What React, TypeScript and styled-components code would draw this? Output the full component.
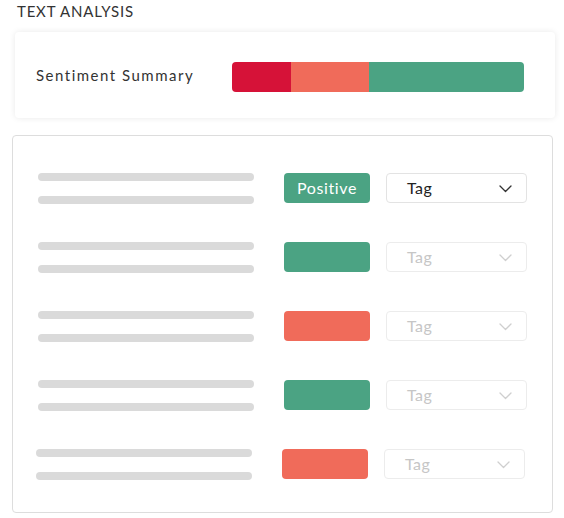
import React from "react";
import styled, { createGlobalStyle } from "styled-components";

const Global = createGlobalStyle`
  html, body { margin: 0; padding: 0; background: #ffffff; }
  body { font-family: "Lato", "Noto Sans", sans-serif; color: #222; }
`;

const Page = styled.div`
  width: 564px;
  height: 518px;
  box-sizing: border-box;
  padding: 2px 0 0 0;
  display: flex;
  flex-direction: column;
`;

const Title = styled.div`
  margin-left: 17px;
  font-size: 15px;
  line-height: 18px;
  color: #333;
  letter-spacing: 0.8px;
`;

const SummaryCard = styled.div`
  margin: 12px 9px 0 15px;
  height: 86px;
  box-sizing: border-box;
  padding: 2px 31px 0 21px;
  background: #fff;
  border-radius: 4px;
  box-shadow: 0 0 6px rgba(0, 0, 0, 0.09);
  display: flex;
  align-items: center;
  justify-content: space-between;
`;

const SummaryLabel = styled.span`
  font-size: 15px;
  color: #333;
  letter-spacing: 1.5px;
  margin-top: -3px;
`;

const Bar = styled.div`
  width: 292px;
  height: 30px;
  display: flex;
  border-radius: 4px;
  overflow: hidden;
  margin-top: 2px;
`;

const Segment = styled.div<{ $color: string; $w: number }>`
  width: ${(p) => p.$w}px;
  background: ${(p) => p.$color};
`;

const Panel = styled.div`
  margin: 17px 11px 0 12px;
  height: 378px;
  box-sizing: border-box;
  border: 1px solid #dddddd;
  border-radius: 4px;
  padding: 37px 25px 0 25px;
  display: flex;
  flex-direction: column;
  gap: 39px;
`;

const Row = styled.div<{ $shift?: number }>`
  display: flex;
  align-items: center;
  height: 30px;
  margin-left: ${(p) => -(p.$shift || 0)}px;
`;

const Lines = styled.div`
  width: 216px;
  display: flex;
  flex-direction: column;
  gap: 15px;
  margin-top: 1px;
`;

const Line = styled.div`
  height: 8px;
  border-radius: 4px;
  background: #dadada;
`;

const Badge = styled.div<{ $color: string }>`
  margin-left: 30px;
  width: 86px;
  height: 30px;
  border-radius: 4px;
  background: ${(p) => p.$color};
  color: #fff;
  font-size: 16px;
  letter-spacing: 0.6px;
  display: flex;
  align-items: center;
  justify-content: center;
  padding-bottom: 2px;
  box-sizing: border-box;
`;

const Select = styled.div<{ $active?: boolean }>`
  margin-left: 16px;
  width: 141px;
  height: 30px;
  box-sizing: border-box;
  border: 1px solid ${(p) => (p.$active ? "#e3e3e3" : "#ececec")};
  border-radius: 4px;
  padding: 0 14px 2px 20px;
  display: flex;
  align-items: center;
  justify-content: space-between;
  color: ${(p) => (p.$active ? "#222" : "#c6c6c6")};
  font-size: 16px;
  letter-spacing: 0.5px;
`;

const ChevronBox = styled.svg`
  margin-top: 3px;
`;

const Chevron = ({ color }: { color: string }) => (
  <ChevronBox width="13" height="8" viewBox="0 0 13 8" fill="none">
    <path d="M1 1 L6.5 6.5 L12 1" stroke={color} strokeWidth="1.3" strokeLinecap="round" strokeLinejoin="round" />
  </ChevronBox>
);

const GREEN = "#4ba383";
const ORANGE = "#f06b5a";
const RED = "#d61238";

const rows = [
  { color: GREEN, label: "Positive", active: true, shift: 0 },
  { color: GREEN, label: "", active: false, shift: 0 },
  { color: ORANGE, label: "", active: false, shift: 0 },
  { color: GREEN, label: "", active: false, shift: 0 },
  { color: ORANGE, label: "", active: false, shift: 2 },
];

export default function App() {
  return (
    <>
      <Global />
      <Page>
        <Title>TEXT ANALYSIS</Title>
        <SummaryCard>
          <SummaryLabel>Sentiment Summary</SummaryLabel>
          <Bar>
            <Segment $color={RED} $w={59} />
            <Segment $color={ORANGE} $w={78} />
            <Segment $color={GREEN} $w={155} />
          </Bar>
        </SummaryCard>
        <Panel>
          {rows.map((r, i) => (
            <Row key={i} $shift={r.shift}>
              <Lines>
                <Line />
                <Line />
              </Lines>
              <Badge $color={r.color}>{r.label}</Badge>
              <Select $active={r.active}>
                <span>Tag</span>
                <Chevron color={r.active ? "#333" : "#cfcfcf"} />
              </Select>
            </Row>
          ))}
        </Panel>
      </Page>
    </>
  );
}
